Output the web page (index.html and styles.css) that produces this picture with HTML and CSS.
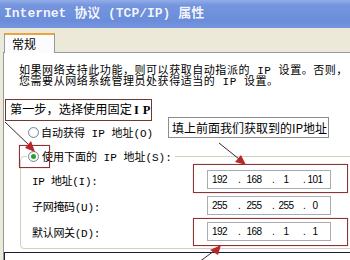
FILE: index.html
```html
<!DOCTYPE html>
<html lang="zh-CN">
<head>
  <meta charset="UTF-8">
  <title>Internet 协议 (TCP/IP) 属性</title>
  <link rel="stylesheet" href="styles.css">
</head>
<body>

  <div class="dialog">
    <!-- Title bar -->
    <div class="titlebar">Internet 协议 (TCP/IP) 属性</div>

    <!-- Tabs -->
    <div class="tabs">
      <div class="tab">常规</div>
    </div>

    <!-- Tab page -->
    <div class="panel">
      <p class="intro">如果网络支持此功能，则可以获取自动指派的 IP 设置。否则，<br>您需要从网络系统管理员处获得适当的 IP 设置。</p>

      <div class="step">第一步，选择使用固定<b>I P</b></div>

      <div class="option auto"><span class="radio"></span><span class="label">自动获得 IP 地址(O)</span></div>

      <fieldset class="group">
        <legend class="option"><span class="radio on"></span><span class="label">使用下面的 IP 地址(S):</span></legend>

        <div class="field">
          <span class="name">IP 地址(I):</span>
          <span class="ip"><span class="n n1">192</span><span class="d d1">.</span><span class="n n2">168</span><span class="d d2">.</span><span class="n n3">1</span><span class="d d3">.</span><span class="n n4">101</span></span>
        </div>
        <div class="field">
          <span class="name">子网掩码(U):</span>
          <span class="ip"><span class="n n1">255</span><span class="d d1">.</span><span class="n n2">255</span><span class="d d2">.</span><span class="n n3">255</span><span class="d d3">.</span><span class="n n4">0</span></span>
        </div>
        <div class="field">
          <span class="name">默认网关(D):</span>
          <span class="ip"><span class="n n1">192</span><span class="d d1">.</span><span class="n n2">168</span><span class="d d2">.</span><span class="n n3">1</span><span class="d d3">.</span><span class="n n4">1</span></span>
        </div>
      </fieldset>

      <div class="next-box"></div>
    </div>

    <!-- Annotations drawn over the dialog -->
    <div class="note">填上前面我们获取到的IP地址</div>
    <div class="mark mark-radio"></div>
    <div class="mark mark-ip"></div>
    <div class="mark mark-gw"></div>

    <svg class="arrows" width="350" height="260" viewBox="0 0 350 260">
      <line x1="5" y1="122" x2="30" y2="146" stroke="#3a2a2a" stroke-width="1"/>
      <polygon points="35,152 25,148 31,141" fill="#b8282a"/>
      <line x1="219" y1="143" x2="239" y2="159" stroke="#3a2a2a" stroke-width="1"/>
      <polygon points="246,165 235,162 241,155" fill="#b8282a"/>
      <line x1="199" y1="262" x2="214" y2="251" stroke="#3a2a2a" stroke-width="1"/>
      <polygon points="221,245 218,255 210,250" fill="#b8282a"/>
    </svg>
  </div>

</body>
</html>
```

FILE: styles.css
```css
body {
  margin: 0;
  background-color: #fff;
}

.dialog {
  position: relative;
  width: 350px;
  height: 260px;
  overflow: hidden;
  background-color: #ece9d8;
  color: #000;
  font-family: "Liberation Mono", "Noto Sans CJK SC", monospace;
}

.titlebar {
  height: 28px;
  line-height: 28px;
  padding-left: 4px;
  background: linear-gradient(#93aee8 0%, #7596de 18%, #6b8cda 75%, #7797df 100%);
  color: #f2f5ff;
  font-weight: bold;
  font-size: 13px;
  white-space: nowrap;
  text-shadow: 0 0 1px #5573c2;
}

.tabs {
  height: 24px;
  padding-left: 4px;
  display: flex;
  align-items: flex-end;
}

.tab {
  position: relative;
  z-index: 1;
  width: 51px;
  height: 20px;
  margin-bottom: -1px;
  box-sizing: border-box;
  padding-left: 7px;
  background-color: #fcfcfe;
  border: 1px solid #919b9c;
  border-top: 2px solid #e9a53c;
  border-bottom: none;
  font-family: "Noto Sans CJK SC", sans-serif;
  font-size: 12px;
  line-height: 17px;
}

.panel {
  margin-left: 3px;
  height: 240px;
  background-color: #fff;
  border-top: 1px solid #919b9c;
  border-left: 1px solid #919b9c;
}

.intro {
  margin: 13px 0 0 15px;
  font-size: 11px;
  letter-spacing: 0.55px;
  line-height: 10.5px;
  white-space: nowrap;
}

.step {
  margin: 12px 0 0 1px;
  width: 147px;
  height: 22px;
  box-sizing: border-box;
  padding-left: 4px;
  border: 1.5px solid #6e3a30;
  font-family: "Noto Sans CJK SC", sans-serif;
  font-size: 12.2px;
  line-height: 19px;
  white-space: nowrap;
}

.step b {
  margin-left: 2px;
  font-family: "Liberation Serif", serif;
  font-size: 12.5px;
  word-spacing: 1px;
}

.option {
  display: flex;
  align-items: center;
  height: 14px;
  font-size: 11px;
  white-space: nowrap;
}

.auto {
  margin: 4px 0 0 24px;
}

.option .label {
  margin-left: 2px;
}

.radio {
  width: 11px;
  height: 11px;
  box-sizing: border-box;
  border: 1px solid #7d8a99;
  border-radius: 50%;
  background: radial-gradient(#fff 40%, #e4e6ea);
  display: flex;
  align-items: center;
  justify-content: center;
}

.radio.on::after {
  content: "";
  width: 5px;
  height: 5px;
  border-radius: 50%;
  background-color: #2aa12e;
}

.group {
  margin: 10px 0 0 16px;
  width: 400px;
  padding: 7px 0 7px 6px;
  border: 1px solid #d0d0bf;
  border-radius: 4px;
}

.group legend {
  padding: 0 3px 0 1px;
}

.group legend .label {
  margin-left: 3px;
}

.field {
  display: flex;
  align-items: center;
  height: 19px;
  margin-top: 7px;
}

.field:first-of-type {
  margin-top: 0;
}

.name {
  width: 175px;
  margin-left: 5px;
  font-size: 11px;
  letter-spacing: -0.3px;
  white-space: nowrap;
}

.ip {
  width: 124px;
  height: 19px;
  box-sizing: border-box;
  border: 1px solid #a5acb2;
  display: flex;
  align-items: center;
  font-family: "Liberation Sans", sans-serif;
  font-size: 10px;
  letter-spacing: -0.6px;
}

.n {
  text-align: center;
}

.n1 { width: 23px; }
.n2 { width: 24px; }
.n3 { width: 20px; }
.n4 { width: 16px; }

.d {
  width: 4px;
}

.d1 { margin-left: 7px; }
.d2 { margin-left: 6px; }
.d3 { margin-left: 7px; }

.next-box {
  margin-top: 3px;
  height: 30px;
  border: 1.5px solid #1b1b3a;
  border-right: none;
  background-color: #fff;
}

.note {
  position: absolute;
  left: 168px;
  top: 117px;
  width: 161px;
  height: 21px;
  box-sizing: border-box;
  padding-left: 3px;
  background-color: #fff;
  border: 1px solid #8d8d8d;
  font-family: "Noto Sans CJK SC", sans-serif;
  font-size: 12px;
  line-height: 19px;
  white-space: nowrap;
}

.mark {
  position: absolute;
  box-sizing: border-box;
  border: 1.5px solid #8b3434;
  box-shadow: 0 0 1px rgba(160, 60, 60, 0.5);
}

.mark-radio {
  left: 19px;
  top: 145px;
  width: 31px;
  height: 23px;
}

.mark-ip {
  left: 193px;
  top: 164px;
  width: 155px;
  height: 29px;
}

.mark-gw {
  left: 193px;
  top: 218px;
  width: 155px;
  height: 28px;
}

.arrows {
  position: absolute;
  left: 0;
  top: 0;
  pointer-events: none;
}
```
